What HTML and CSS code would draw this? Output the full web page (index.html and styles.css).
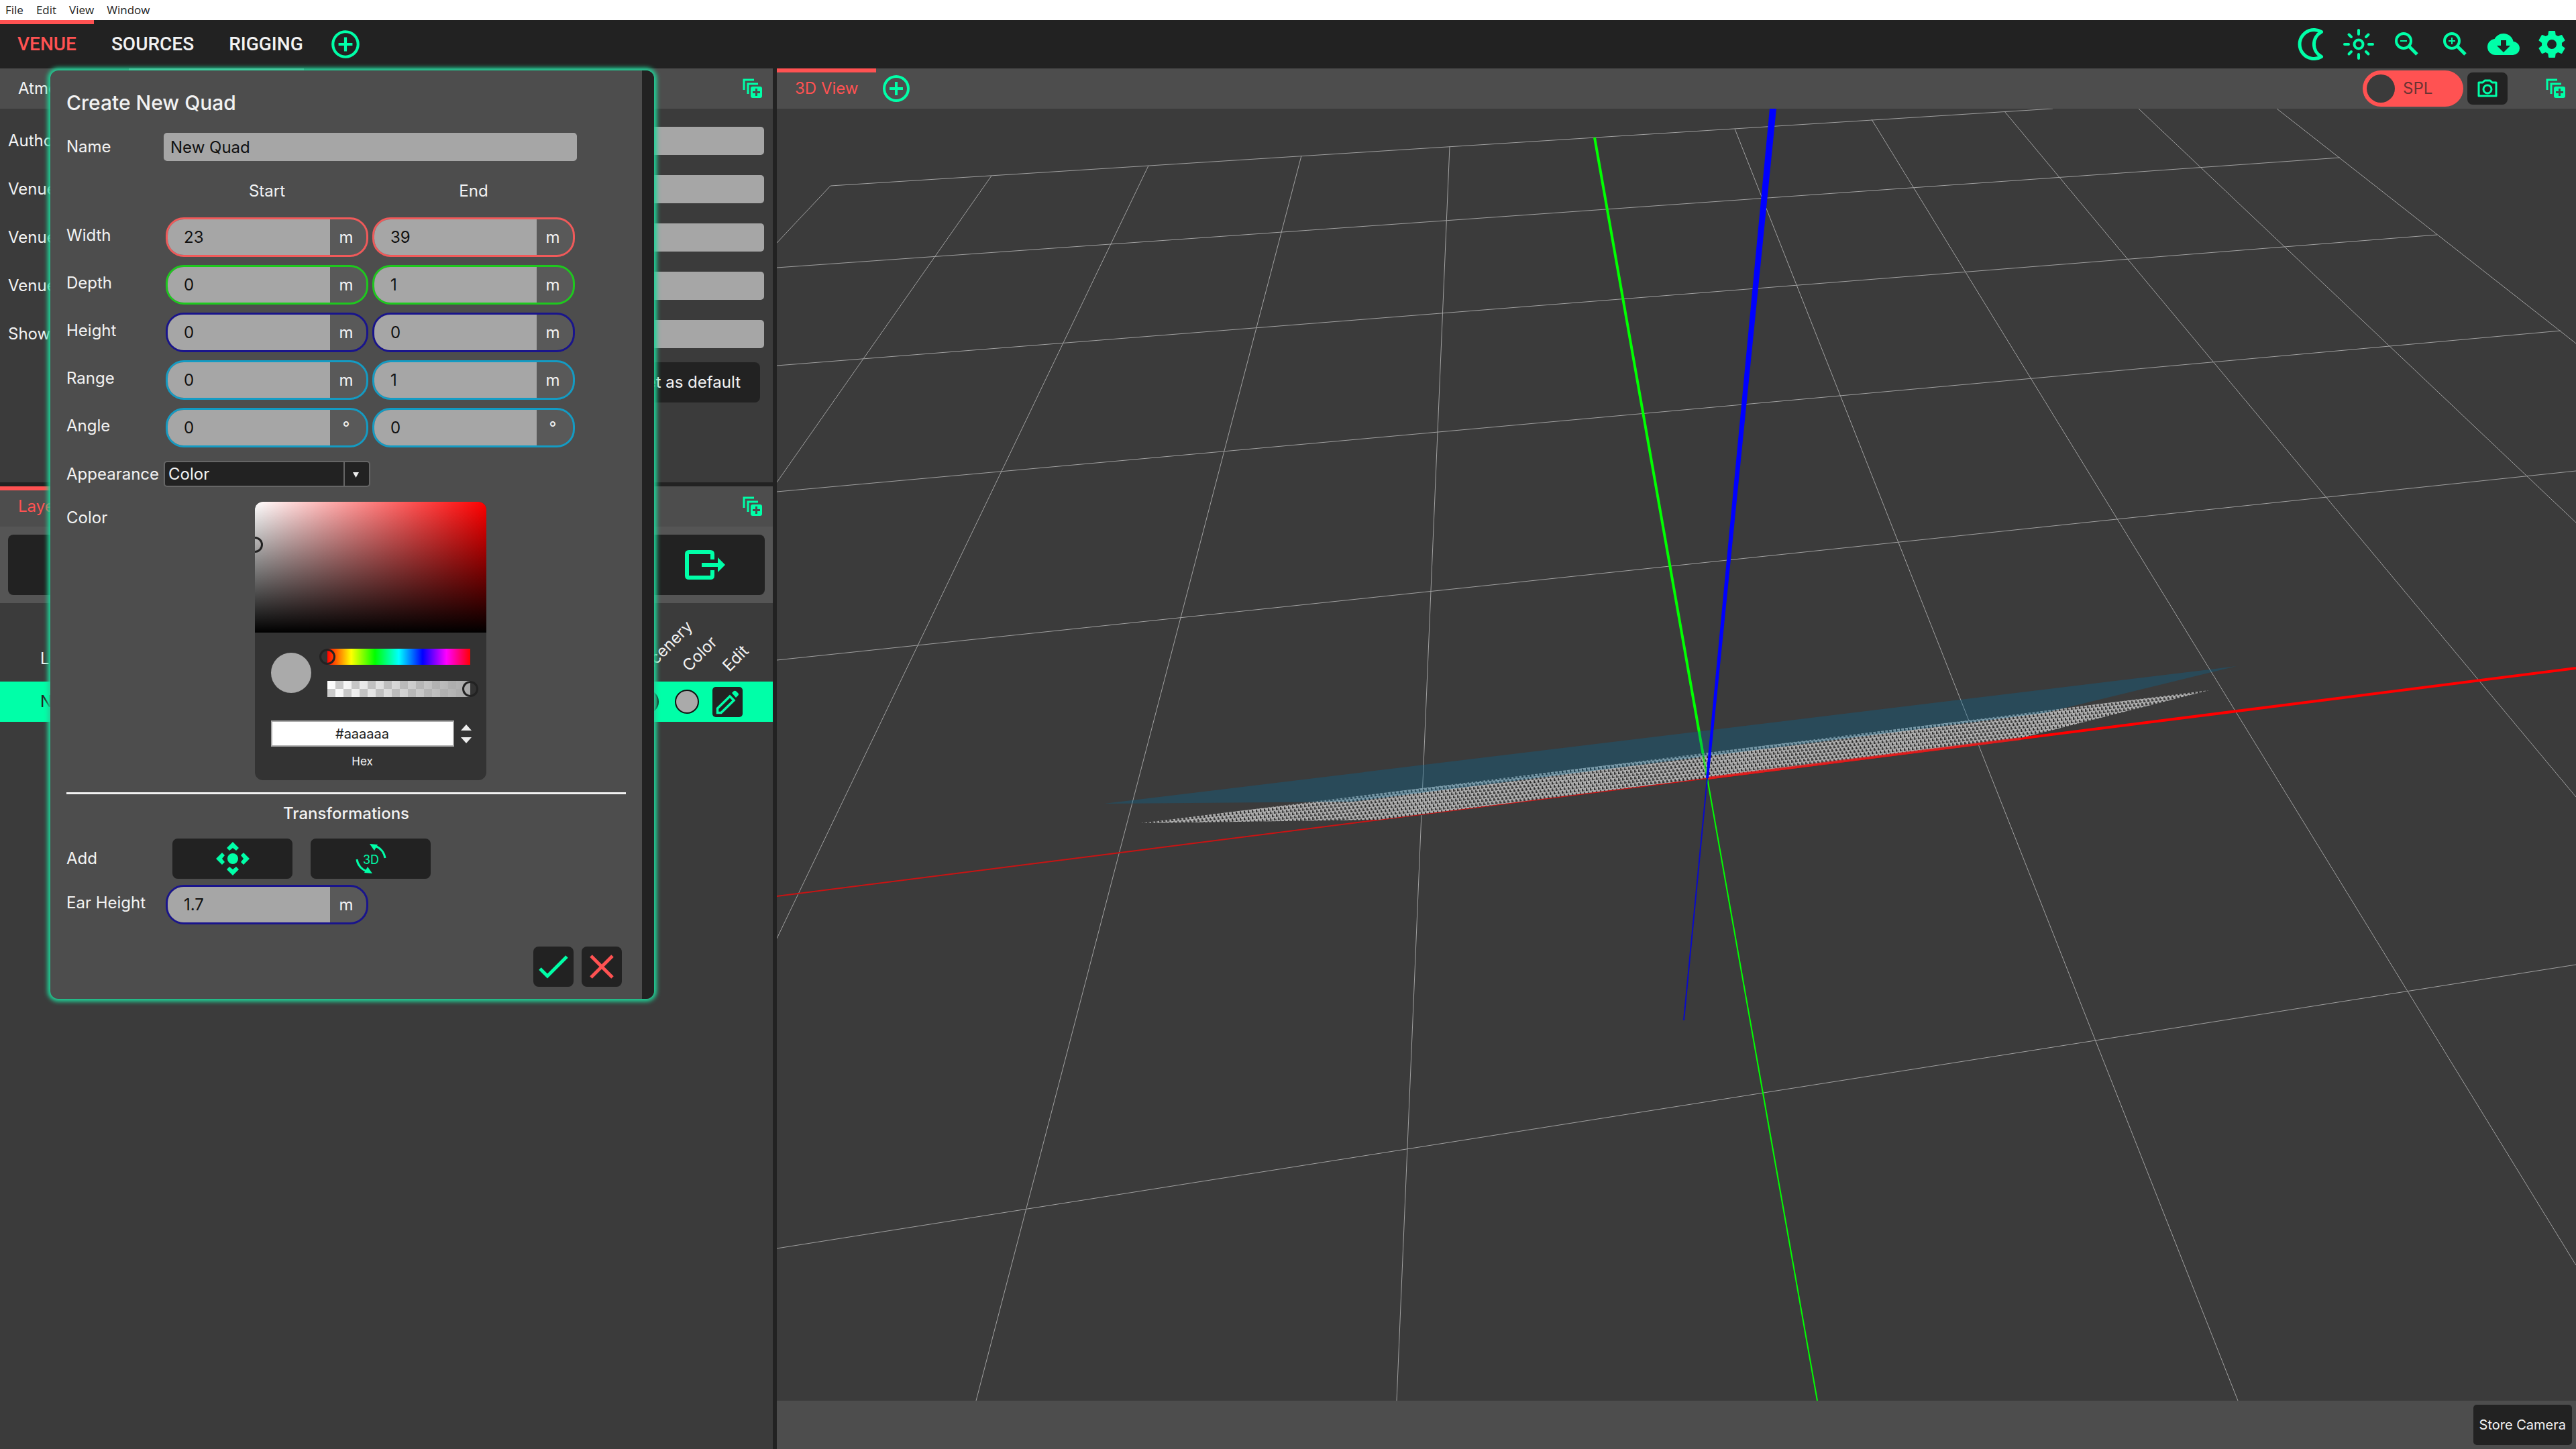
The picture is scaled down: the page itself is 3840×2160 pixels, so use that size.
FILE: index.html
```
<!DOCTYPE html>
<html lang="en">
<head>
    <meta charset="UTF-8">
    <meta name="viewport" content="width=device-width, initial-scale=1.0">
    <title>Venue</title>
    <link rel="stylesheet" href="styles.css">
</head>
<body>
    <!-- shared icons -->
    <svg class="symbols" aria-hidden="true">
        <symbol id="icon-plus" viewBox="0 0 24 24">
            <path d="M12,20C7.59,20 4,16.41 4,12C4,7.59 7.59,4 12,4C16.41,4 20,7.59 20,12C20,16.41 16.41,20 12,20M12,2A10,10 0 0,0 2,12A10,10 0 0,0 12,22A10,10 0 0,0 22,12A10,10 0 0,0 12,2M13,7H11V11H7V13H11V17H13V13H17V11H13V7Z" fill="currentColor"/>
        </symbol>
        <symbol id="icon-stack" viewBox="0 0 30 30">
            <path d="M2 17V2H17M8 23V8H23" fill="none" stroke="currentColor" stroke-width="3"/>
            <rect x="12" y="12" width="17" height="17" rx="3" fill="currentColor"/>
            <path d="M20.5 15V26M15 20.5H26" stroke="#4d4d4d" stroke-width="3"/>
        </symbol>
    </svg>

    <div class="menubar">
        <a href="#">File</a>
        <a href="#">Edit</a>
        <a href="#">View</a>
        <a href="#">Window</a>
    </div>

    <nav class="navbar">
        <a href="#" class="nav-tab active">VENUE</a>
        <a href="#" class="nav-tab">SOURCES</a>
        <a href="#" class="nav-tab">RIGGING</a>
        <button class="icon-button nav-add" aria-label="Add tab"><svg><use href="#icon-plus"/></svg></button>
        <div class="nav-icons">
            <button class="icon-button" aria-label="Dark mode">
                <svg viewBox="0 0 48 48"><path d="M40.5 5.5A21.5 21.5 0 1 0 40.5 42.5A21 21 0 0 1 40.5 5.5Z" fill="none" stroke="currentColor" stroke-width="5" stroke-linejoin="round"/></svg>
            </button>
            <button class="icon-button" aria-label="Light mode">
                <svg viewBox="0 0 48 48" fill="none" stroke="currentColor" stroke-width="4" stroke-linecap="round">
                    <circle cx="24" cy="24" r="6.5"/>
                    <path d="M24 3V9M24 39V45M3 24H9M39 24H45M9.500 9.500L13 13M35 35L38.500 38.500M9.500 38.500L13 35M35 13L38.500 9.500"/>
                </svg>
            </button>
            <button class="icon-button" aria-label="Zoom out">
                <svg viewBox="0 0 48 48" fill="none" stroke="currentColor"><circle cx="19" cy="19" r="11" stroke-width="4"/><path d="M27 27L39 39" stroke-width="5"/><path d="M14 19H24" stroke-width="2"/></svg>
            </button>
            <button class="icon-button" aria-label="Zoom in">
                <svg viewBox="0 0 48 48" fill="none" stroke="currentColor"><circle cx="19" cy="19" r="11" stroke-width="4"/><path d="M27 27L39 39" stroke-width="5"/><path d="M14 19H24M19 14V24" stroke-width="2"/></svg>
            </button>
            <button class="icon-button" aria-label="Download">
                <svg viewBox="0 0 24 24"><path d="M17,13L12,18L7,13H10V9H14V13M19.35,10.03C18.67,6.59 15.64,4 12,4C9.11,4 6.6,5.64 5.35,8.03C2.34,8.36 0,10.9 0,14A6,6 0 0,0 6,20H19A5,5 0 0,0 24,15C24,12.36 21.95,10.22 19.35,10.03Z" fill="currentColor"/></svg>
            </button>
            <button class="icon-button" aria-label="Settings">
                <svg viewBox="0 0 24 24"><path d="M12,15.5A3.5,3.5 0 0,1 8.5,12A3.5,3.5 0 0,1 12,8.5A3.5,3.5 0 0,1 15.5,12A3.5,3.5 0 0,1 12,15.5M19.43,12.97C19.47,12.65 19.5,12.33 19.5,12C19.5,11.67 19.47,11.34 19.43,11L21.54,9.37C21.73,9.22 21.78,8.95 21.66,8.73L19.66,5.27C19.54,5.05 19.27,4.96 19.05,5.05L16.56,6.05C16.04,5.66 15.5,5.32 14.87,5.07L14.5,2.42C14.46,2.18 14.25,2 14,2H10C9.75,2 9.54,2.18 9.5,2.42L9.13,5.07C8.5,5.32 7.96,5.66 7.44,6.05L4.95,5.05C4.73,4.96 4.46,5.05 4.34,5.27L2.34,8.73C2.21,8.95 2.27,9.22 2.46,9.37L4.57,11C4.53,11.34 4.5,11.67 4.5,12C4.5,12.33 4.53,12.65 4.57,12.97L2.46,14.63C2.27,14.78 2.21,15.05 2.34,15.27L4.34,18.73C4.46,18.95 4.73,19.03 4.95,18.95L7.44,17.94C7.96,18.34 8.5,18.68 9.13,18.93L9.5,21.58C9.54,21.82 9.75,22 10,22H14C14.25,22 14.46,21.82 14.5,21.58L14.87,18.93C15.5,18.67 16.04,18.34 16.56,17.94L19.05,18.95C19.27,19.03 19.54,18.95 19.66,18.73L21.66,15.27C21.78,15.05 21.73,14.78 21.54,14.63L19.43,12.97Z" fill="currentColor"/></svg>
            </button>
        </div>
    </nav>

    <main class="workspace">
        <aside class="sidebar">
            <section>
                <div class="panel-header">
                    <a href="#" class="tab">Atmosphere</a>
                    <a href="#" class="tab selected">Venue Information</a>
                    <button class="icon-button stack" aria-label="Add panel"><svg><use href="#icon-stack"/></svg></button>
                </div>
                <div class="settings">
                    <div class="setting"><label for="author">Author</label><input type="text" id="author"></div>
                    <div class="setting"><label for="venue">Venue</label><input type="text" id="venue"></div>
                    <div class="setting"><label for="venue-city">Venue</label><input type="text" id="venue-city"></div>
                    <div class="setting"><label for="venue-type">Venue</label><input type="text" id="venue-type"></div>
                    <div class="setting"><label for="show">Show</label><input type="text" id="show"></div>
                    <button class="btn default-button">Set as default</button>
                </div>
            </section>
            <section class="layers">
                <div class="panel-header">
                    <a href="#" class="tab active">Layers</a>
                    <button class="icon-button stack" aria-label="Add panel"><svg><use href="#icon-stack"/></svg></button>
                </div>
                <div class="toolbar">
                    <button class="btn" aria-label="Add quad"></button>
                    <button class="btn" aria-label="Add circle"></button>
                    <button class="btn" aria-label="Add group"></button>
                    <button class="btn" aria-label="Delete"></button>
                    <button class="btn" aria-label="Import"></button>
                    <button class="btn" aria-label="Export">
                        <svg width="60" height="44" viewBox="0 0 60 44"><path d="M41 14V6Q41 3 38 3H6Q3 3 3 6V38Q3 41 6 41H38Q41 41 41 38V30M25 22H50" fill="none" stroke="currentColor" stroke-width="6"/><path d="M49 11L60 22L49 33Z" fill="currentColor"/></svg>
                    </button>
                </div>
                <table class="layer-table">
                    <thead>
                        <tr>
                            <th class="name">Layer</th>
                            <th class="turned"><span>Scenery</span></th>
                            <th class="turned"><span>Color</span></th>
                            <th class="turned"><span>Edit</span></th>
                            <th class="end"></th>
                        </tr>
                    </thead>
                    <tbody>
                        <tr>
                            <td class="name">New Quad</td>
                            <td><span class="dot dark"></span></td>
                            <td><span class="dot"></span></td>
                            <td>
                                <button class="btn edit" aria-label="Edit layer">
                                    <svg width="45" height="45" viewBox="0 0 45 45"><path d="M7.500 38.500V32L26 14L32 20L13 38.500Z" fill="none" stroke="currentColor" stroke-width="3.500"/><path d="M29 9L32 6Q34 5 36 7L38 9Q40 11 38 13L35 16Z" fill="currentColor"/></svg>
                                </button>
                            </td>
                            <td></td>
                        </tr>
                    </tbody>
                </table>
            </section>
        </aside>

        <section class="view">
            <div class="panel-header">
                <a href="#" class="tab active">3D View</a>
                <button class="icon-button view-add" aria-label="Add view"><svg><use href="#icon-plus"/></svg></button>
                <div class="view-tools">
                    <label class="toggle"><input type="checkbox">SPL</label>
                    <button class="btn camera" aria-label="Screenshot">
                        <svg width="30" height="28" viewBox="0 0 30 28"><path d="M2 5H8L11 2H19L22 5H28V25H2Z" fill="none" stroke="currentColor" stroke-width="3" stroke-linejoin="round"/><circle cx="15" cy="15" r="6" fill="none" stroke="currentColor" stroke-width="3"/></svg>
                    </button>
                    <button class="icon-button stack" aria-label="Add panel"><svg><use href="#icon-stack"/></svg></button>
                </div>
            </div>
            <div class="canvas">
                <svg viewBox="0 0 2682 1926" preserveAspectRatio="xMidYMid slice">
                    <defs>
                        <pattern id="mesh" width="6" height="10" patternUnits="userSpaceOnUse" patternTransform="skewY(-6)">
                            <rect width="6" height="10" fill="#b0b0b0"/>
                            <path d="M1 0V4M4 5V9" stroke="#111" stroke-width="1.500"/>
                            <path d="M1 3H4M4 8H6M0 8H1" stroke="#111" stroke-width="1"/>
                        </pattern>
                    </defs>
                    <g class="grid">
                        <path d="M80 115L0 200M320 100L0 557M554 85L0 1237M782 70L297 1926M1003 56L924 1926"/>
                        <path d="M1428 30L2178 1926M1632 16L2682 1724M1830 4L2682 1026M2030 0L2682 617M2236 0L2682 350"/>
                        <path d="M80 115L1902 0M0 237L2330 73M0 383L2475 188M0 571L2659 331M0 822L2682 540M0 1699L2682 1276"/>
                    </g>
                    <path class="axis-x" d="M0 1174L1387 998"/>
                    <path class="axis-x front" d="M1387 998L2682 834"/>
                    <path class="axis-y front" d="M1219 43L1387 998"/>
                    <polygon points="543,1065 2135,867 1855,938 897,1060" fill="url(#mesh)"/>
                    <path class="axis-x over" d="M1387 998L1855 939"/>
                    <path class="axis-y over" d="M1380 959L1387 998"/>
                    <polygon class="ear-plane" points="488,1036 2176,831 1889,901 858,1033"/>
                    <path class="axis-y" d="M1387 998L1551 1926"/>
                    <path class="axis-z" d="M1387 998L1352 1359"/>
                    <polygon class="axis-z-front" points="1480,0 1490,0 1389,998 1385,998"/>
                </svg>
            </div>
            <div class="view-footer">
                <button class="btn store">Store Camera</button>
            </div>
        </section>
    </main>

    <div class="dialog" role="dialog" aria-labelledby="dialog-title">
        <form class="dialog-form">
            <h2 id="dialog-title">Create New Quad</h2>
            <div class="row name-row">
                <label for="name">Name</label>
                <input type="text" id="name" class="wide" value="New Quad">
            </div>
            <div class="row heads">
                <span></span>
                <span>Start</span>
                <span>End</span>
            </div>
            <div class="ranges">
                <div class="row">
                    <label for="width-start">Width</label>
                    <div class="pill red"><input type="text" id="width-start" value="23"><span>m</span></div>
                    <div class="pill red"><input type="text" aria-label="Width end" value="39"><span>m</span></div>
                </div>
                <div class="row">
                    <label for="depth-start">Depth</label>
                    <div class="pill green"><input type="text" id="depth-start" value="0"><span>m</span></div>
                    <div class="pill green"><input type="text" aria-label="Depth end" value="1"><span>m</span></div>
                </div>
                <div class="row">
                    <label for="height-start">Height</label>
                    <div class="pill navy"><input type="text" id="height-start" value="0"><span>m</span></div>
                    <div class="pill navy"><input type="text" aria-label="Height end" value="0"><span>m</span></div>
                </div>
                <div class="row">
                    <label for="range-start">Range</label>
                    <div class="pill cyan"><input type="text" id="range-start" value="0"><span>m</span></div>
                    <div class="pill cyan"><input type="text" aria-label="Range end" value="1"><span>m</span></div>
                </div>
                <div class="row">
                    <label for="angle-start">Angle</label>
                    <div class="pill cyan"><input type="text" id="angle-start" value="0"><span>°</span></div>
                    <div class="pill cyan"><input type="text" aria-label="Angle end" value="0"><span>°</span></div>
                </div>
            </div>
            <div class="row appearance">
                <label for="appearance">Appearance</label>
                <div class="select">
                    <select id="appearance"><option>Color</option></select>
                    <svg width="38" height="35" viewBox="0 0 38 35"><path d="M1 0V35" stroke="#666" stroke-width="2"/><path d="M14 15H23L18.500 23Z" fill="#eee"/></svg>
                </div>
            </div>
            <div class="row color-row">
                <label for="hex">Color</label>
                <div class="picker">
                    <div class="saturation"><span class="handle"></span></div>
                    <div class="controls">
                        <span class="swatch"></span>
                        <div class="sliders">
                            <div class="slider hue"><input type="range" aria-label="Hue" min="0" max="360" value="0"></div>
                            <div class="slider alpha"><input type="range" aria-label="Alpha" min="0" max="100" value="100"></div>
                        </div>
                    </div>
                    <div class="hex">
                        <input type="text" id="hex" value="#aaaaaa">
                        <button type="button" class="icon-button" aria-label="Change format">
                            <svg width="16" height="28" viewBox="0 0 16 28"><path d="M0 9L8 0L16 9ZM0 19H16L8 28Z" fill="#eee"/></svg>
                        </button>
                        <span>Hex</span>
                    </div>
                </div>
            </div>
            <hr>
            <h3>Transformations</h3>
            <div class="row add-row">
                <span>Add</span>
                <div class="add-buttons">
                    <button type="button" class="btn" aria-label="Add translation">
                        <svg width="50" height="50" viewBox="-25 -25 50 50" fill="currentColor">
                            <circle r="8"/>
                            <path id="arrow" d="M0 -25L9 -16L5 -12L0 -16L-5 -12L-9 -16Z"/>
                            <use href="#arrow" transform="rotate(90)"/>
                            <use href="#arrow" transform="rotate(180)"/>
                            <use href="#arrow" transform="rotate(270)"/>
                        </svg>
                    </button>
                    <button type="button" class="btn" aria-label="Add rotation">
                        <svg width="48" height="48" viewBox="0 0 48 48">
                            <path d="M45 23A22 22 0 0 0 30 5M3 25A22 22 0 0 0 18 43" fill="none" stroke="currentColor" stroke-width="3"/>
                            <path d="M22 2L34 3L29 12ZM26 46L14 45L19 36Z" fill="currentColor"/>
                            <text x="24" y="32" text-anchor="middle" font-size="18" fill="currentColor">3D</text>
                        </svg>
                    </button>
                </div>
            </div>
            <div class="row ear-row">
                <label for="ear-height">Ear Height</label>
                <div class="pill navy"><input type="text" id="ear-height" value="1.7"><span>m</span></div>
            </div>
            <div class="actions">
                <button type="button" class="btn" aria-label="Confirm"><svg width="60" height="60" viewBox="0 0 60 60"><path d="M10 33L21 44L50 15" fill="none" stroke="currentColor" stroke-width="5"/></svg></button>
                <button type="button" class="btn cancel" aria-label="Cancel"><svg width="60" height="60" viewBox="0 0 60 60"><path d="M14 14L46 46M46 14L14 46" fill="none" stroke="currentColor" stroke-width="5"/></svg></button>
            </div>
        </form>
        <div class="dialog-scroll"></div>
    </div>
</body>
</html>
```
FILE: styles.css
```
* {
    box-sizing: border-box;
}
body {
    margin: 0;
    height: 100vh;
    display: flex;
    flex-direction: column;
    overflow: hidden;
    font-family: Inter, "Liberation Sans", sans-serif;
    font-size: 24px;
    line-height: 30px;
    color: #f2f2f2;
    background: #3b3b3b;
}
a {
    color: inherit;
    text-decoration: none;
}
button, input, select {
    font: inherit;
    color: inherit;
    border: none;
    margin: 0;
    padding: 0;
}
svg {
    display: block;
}
.symbols {
    position: absolute;
    width: 0;
    height: 0;
}
.icon-button {
    background: none;
    color: #00ffa8;
}
.btn {
    display: flex;
    align-items: center;
    justify-content: center;
    background: #222;
    color: #00ffa8;
    border-radius: 8px;
}

/* top bars */
.menubar {
    flex: none;
    display: flex;
    gap: 19px;
    height: 30px;
    padding-left: 8px;
    background: #fff;
    color: #222;
    font-family: "Open Sans", sans-serif;
    font-size: 17px;
}
.navbar {
    flex: none;
    display: flex;
    align-items: center;
    height: 72px;
    padding-right: 12px;
    background: #222;
    font-family: Roboto, "Liberation Sans", sans-serif;
    font-size: 28px;
    font-weight: 500;
}
.nav-tab {
    height: 72px;
    padding: 0 26px;
    line-height: 60px;
    border-top: 6px solid transparent;
}
.nav-tab.active {
    color: #ff5252;
    border-color: #ff5252;
}
.nav-add svg {
    width: 50px;
    height: 50px;
}
.nav-add {
    margin-left: 12px;
}
.nav-icons {
    display: flex;
    gap: 24px;
    margin-left: auto;
}
.nav-icons svg {
    width: 48px;
    height: 48px;
}

/* panels */
.workspace {
    flex: 1;
    display: flex;
    min-height: 0;
}
.sidebar {
    flex: 0 0 30%;
}
.panel-header {
    display: flex;
    align-items: center;
    height: 60px;
    background: #4d4d4d;
}
.tab {
    height: 60px;
    padding: 0 27px;
    line-height: 48px;
    border-top: 6px solid transparent;
}
.tab.selected {
    border-color: #aaa;
}
.tab.active {
    color: #ff5252;
    border-color: #ff5252;
}
.stack {
    margin-left: auto;
    margin-right: 15px;
}
.stack svg {
    width: 30px;
    height: 30px;
}
.settings {
    display: flex;
    flex-direction: column;
    gap: 30px;
    padding: 27px 13px 119px 12px;
}
.setting {
    display: flex;
    align-items: center;
    justify-content: space-between;
}
.setting input {
    width: 70%;
    height: 42px;
    background: #a6a6a6;
    border-radius: 5px;
}
.default-button {
    align-self: flex-end;
    height: 60px;
    margin: -9px 6px 0 0;
    padding: 0 29px;
    color: #f2f2f2;
}
.layers {
    border-top: 6px solid #222;
}
.toolbar {
    display: grid;
    grid-template-columns: repeat(6, 1fr);
    gap: 12px;
    padding: 12px;
    background: #555;
}
.toolbar .btn {
    height: 90px;
}
.layer-table {
    width: 100%;
    table-layout: fixed;
    border-collapse: collapse;
}
.layer-table th, .layer-table td {
    width: 60px;
    padding: 0;
    font-weight: 400;
    text-align: left;
}
.layer-table th {
    height: 117px;
}
.layer-table td {
    height: 60px;
    color: #222;
    background: #00ffa8;
}
.layer-table .name {
    width: auto;
    padding-left: 60px;
}
.layer-table th.name {
    padding-top: 48px;
}
.layer-table th.end {
    width: 38px;
}
.layer-table th.turned {
    padding: 0 0 11px 36px;
    vertical-align: bottom;
}
.turned span {
    display: block;
    width: 0;
    line-height: 24px;
    white-space: nowrap;
    transform: rotate(-45deg);
    transform-origin: 0 100%;
}
.dot {
    display: block;
    width: 36px;
    height: 36px;
    margin: auto;
    background: #aaa;
    border: 2px solid #111;
    border-radius: 50%;
}
.dot.dark {
    background: #3b3b3b;
}
.edit {
    width: 45px;
    height: 45px;
    margin: auto;
    border-radius: 5px;
}

/* 3d view */
.view {
    flex: 1;
    display: flex;
    flex-direction: column;
    min-width: 0;
    border-left: 6px solid #222;
}
.view-add {
    margin-left: 6px;
}
.view-add svg {
    width: 48px;
    height: 48px;
}
.view-tools {
    display: flex;
    align-items: center;
    gap: 6px;
    margin-left: auto;
}
.view-tools .stack {
    margin-left: 51px;
}
.toggle {
    display: flex;
    align-items: center;
    gap: 12px;
    width: 150px;
    height: 54px;
    padding-left: 6px;
    border-radius: 27px;
    background: #ff5252;
    color: #6b3333;
}
.toggle input {
    appearance: none;
    width: 42px;
    height: 42px;
    border-radius: 50%;
    background: #3b3b3b;
}
.camera {
    width: 60px;
    height: 48px;
}
.canvas {
    flex: 1;
    min-height: 0;
}
.canvas svg {
    width: 100%;
    height: 100%;
}
.grid {
    fill: none;
    stroke: #a0a0a0;
    stroke-width: 1;
}
.axis-x, .axis-y, .axis-z {
    fill: none;
    stroke-width: 2;
}
.axis-x {
    stroke: #c81414;
}
.axis-y {
    stroke: #0f0;
}
.axis-z {
    stroke: #0a0ac8;
}
.axis-x.front {
    stroke: #f00;
    stroke-width: 4;
}
.axis-y.front {
    stroke-width: 4;
}
.axis-x.over {
    stroke: #d92020;
    stroke-width: 4;
    opacity: 0.8;
}
.axis-y.over {
    stroke-width: 3;
    opacity: 0.6;
}
.axis-z-front {
    fill: #00f;
}
.ear-plane {
    fill: rgba(0, 110, 160, 0.3);
}
.view-footer {
    display: flex;
    justify-content: flex-end;
    padding: 6px;
    background: #4d4d4d;
}
.store {
    height: 60px;
    padding: 0 9px;
    font-size: 20px;
    color: #f2f2f2;
    border-radius: 5px;
}

/* dialog */
.dialog {
    position: absolute;
    left: 75px;
    top: 105px;
    display: flex;
    width: 900px;
    overflow: hidden;
    background: #4d4d4d;
    border-radius: 12px;
    box-shadow: 0 0 6px 4px #1fd699;
}
.dialog-form {
    flex: 1;
    padding: 30px 24px 18px;
}
.dialog-scroll {
    width: 18px;
    background: #222;
}
h2, h3 {
    margin: 0;
    font-weight: 500;
}
h2 {
    font-size: 30px;
    line-height: 36px;
}
.row {
    display: grid;
    grid-template-columns: 145px 308px 308px;
    align-items: center;
}
.name-row {
    margin-top: 27px;
}
.wide {
    grid-column: 2 / 4;
    height: 42px;
    padding: 0 10px;
    background: #a6a6a6;
    color: #111;
    border-radius: 5px;
}
.heads {
    margin: 30px 0 24px;
    text-align: center;
}
.ranges {
    display: grid;
    gap: 12px;
}
.ranges label, .ear-row label {
    padding-bottom: 6px;
}
.pill {
    display: flex;
    height: 59px;
    margin: 0 3px;
    overflow: hidden;
    background: #595959;
    border: 3px solid;
    border-radius: 27px;
}
.pill input {
    flex: 1;
    min-width: 0;
    padding-left: 24px;
    background: #a6a6a6;
    color: #111;
}
.pill span {
    width: 54px;
    padding-right: 6px;
    line-height: 53px;
    text-align: center;
    color: #f2f2f2;
}
.pill.red {
    border-color: #f05a5a;
}
.pill.green {
    border-color: #1ec81e;
}
.pill.navy {
    border-color: #19148c;
}
.pill.cyan {
    border-color: #149bc3;
}
.appearance {
    margin-top: 20px;
}
.select {
    display: flex;
    height: 39px;
    background: #222;
    border: 2px solid #666;
    border-radius: 5px;
}
.select select {
    flex: 1;
    padding-left: 5px;
    appearance: none;
    background: none;
}
.color-row {
    grid-template-columns: 145px 616px;
    align-items: start;
    margin-top: 22px;
}
.color-row > label {
    line-height: 48px;
}
.picker {
    width: 345px;
    margin: 0 auto;
    overflow: hidden;
    background: #333;
    border-radius: 12px;
}
.saturation {
    height: 195px;
    padding-top: 52px;
    overflow: hidden;
    background: linear-gradient(to top, #000, transparent), linear-gradient(to right, #fff, #f00);
}
.handle {
    display: block;
    width: 24px;
    height: 24px;
    margin-left: -12px;
    border: 3px solid #222;
    border-radius: 50%;
}
.controls {
    display: flex;
    align-items: center;
    gap: 24px;
    padding: 24px 24px 35px;
}
.swatch {
    width: 60px;
    height: 60px;
    border-radius: 50%;
    background: #aaa;
}
.sliders {
    flex: 1;
    display: grid;
    gap: 24px;
}
.slider {
    height: 24px;
}
.slider input {
    display: block;
    width: calc(100% + 24px);
    height: 24px;
    margin: 0 -12px;
    appearance: none;
    background: none;
}
.slider input::-webkit-slider-thumb {
    appearance: none;
    width: 24px;
    height: 24px;
    border: 3px solid #222;
    border-radius: 50%;
    background: transparent;
}
.hue {
    background: linear-gradient(to right, #f00, #ff0, #0f0, #0ff, #00f, #f0f, #f00);
}
.alpha {
    background: linear-gradient(to right, transparent, #aaa), repeating-conic-gradient(#ccc 0 25%, #fff 0 50%) 0 0 / 24px 24px;
}
.hex {
    display: grid;
    grid-template-columns: 273px 36px;
    align-items: center;
    row-gap: 12px;
    padding: 0 12px 18px 24px;
    font-size: 20px;
    line-height: 20px;
}
.hex input {
    height: 39px;
    text-align: center;
    color: #222;
    background: #fff;
    border: 2px solid #aaa;
}
.hex svg {
    margin: auto;
}
.hex span {
    font-size: 17px;
    text-align: center;
}
hr {
    height: 3px;
    margin: 18px 0 14px;
    border: none;
    background: #f2f2f2;
}
h3 {
    font-size: 24px;
    text-align: center;
}
.add-row {
    grid-template-columns: 145px 1fr;
    margin: 22px 0 9px;
}
.add-buttons {
    display: flex;
    gap: 27px;
    padding-left: 13px;
}
.add-buttons .btn {
    width: 179px;
    height: 60px;
}
.actions {
    display: flex;
    justify-content: flex-end;
    gap: 12px;
    margin: 33px 6px 0 0;
}
.actions .cancel {
    color: #ff5252;
}
```
